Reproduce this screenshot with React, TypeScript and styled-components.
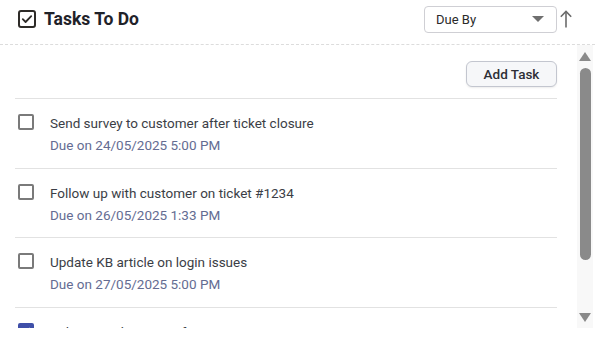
import React from "react";
import styled, { createGlobalStyle } from "styled-components";

const GlobalStyle = createGlobalStyle`
  html, body {
    margin: 0;
    padding: 0;
    background: #ffffff;
  }
  body {
    font-family: Roboto, "Liberation Sans", Arial, sans-serif;
  }
`;

type Task = {
  id: number;
  title: string;
  due: string;
  done?: boolean;
};

const tasks: Task[] = [
  { id: 1, title: "Send survey to customer after ticket closure", due: "24/05/2025 5:00 PM" },
  { id: 2, title: "Follow up with customer on ticket #1234", due: "26/05/2025 1:33 PM" },
  { id: 3, title: "Update KB article on login issues", due: "27/05/2025 5:00 PM" },
  { id: 4, title: "Solve a product issue for customer", due: "28/05/2025 5:00 PM", done: true },
];

const TitleIcon = () => (
  <svg width="18" height="18" viewBox="0 0 18 18" fill="none">
    <rect x="1" y="1" width="16" height="16" rx="2" stroke="#2e2b28" strokeWidth="2" />
    <path d="M4.8 9.2 L7.6 12 L13.2 6.2" stroke="#2e2b28" strokeWidth="1.8" strokeLinecap="round" strokeLinejoin="round" />
  </svg>
);

const SortArrow = () => (
  <svg width="14" height="20" viewBox="0 0 14 20" fill="none">
    <path d="M7 2.5 V18.5" stroke="#6b6b6b" strokeWidth="1.6" />
    <path d="M1.8 7.8 L7 2.5 L12.2 7.8" stroke="#6b6b6b" strokeWidth="1.6" fill="none" />
  </svg>
);

const TaskToDo = () => {
  return (
    <Card>
      <GlobalStyle />
      <Header>
        <Title>
          <TitleIcon />
          Tasks To Do
        </Title>
        <Sorter>
          <Select>
            <span>Due By</span>
            <Caret />
          </Select>
          <SortButton>
            <SortArrow />
          </SortButton>
        </Sorter>
      </Header>
      <Body>
        <ScrollArea>
          <Toolbar>
            <AddButton>Add Task</AddButton>
          </Toolbar>
          <List>
            {tasks.map((t) => (
              <Item key={t.id}>
                <Check $checked={!!t.done}>
                  {t.done && (
                    <svg width="12" height="12" viewBox="0 0 12 12" fill="none">
                      <path d="M2 6.2 L4.8 9 L10 3.2" stroke="#fff" strokeWidth="1.8" />
                    </svg>
                  )}
                </Check>
                <ItemText>
                  <ItemTitle>{t.title}</ItemTitle>
                  <Due>Due on {t.due}</Due>
                </ItemText>
              </Item>
            ))}
          </List>
        </ScrollArea>
        <Scrollbar>
          <ArrowUp />
          <Thumb />
          <ArrowDown />
        </Scrollbar>
      </Body>
    </Card>
  );
};

export default function App() {
  return <TaskToDo />;
}

const Card = styled.div`
  width: 595px;
  height: 337px;
  background: #fff;
  overflow: hidden;
`;

const Header = styled.div`
  height: 45px;
  box-sizing: border-box;
  display: flex;
  align-items: center;
  justify-content: space-between;
  padding: 0 22px 0 18px;
  border-bottom: 1px dashed #dcdcdc;
`;

const Title = styled.h2`
  margin: -6px 0 0;
  display: flex;
  align-items: center;
  gap: 8px;
  font-size: 17.5px;
  font-weight: 700;
  color: #1f2229;
`;

const Sorter = styled.div`
  display: flex;
  align-items: center;
  gap: 2px;
  margin-top: -6px;
`;

const Select = styled.div`
  width: 133px;
  height: 27px;
  box-sizing: border-box;
  border: 1px solid #cfcfd4;
  border-radius: 4px;
  display: flex;
  align-items: center;
  justify-content: space-between;
  padding: 0 12px 0 11px;
  font-size: 13px;
  color: #2a2a2a;
`;

const Caret = styled.span`
  width: 0;
  height: 0;
  border-left: 6px solid transparent;
  border-right: 6px solid transparent;
  border-top: 6px solid #6f6f6f;
`;

const SortButton = styled.div`
  display: flex;
  align-items: center;
`;

const Body = styled.div`
  height: 283px;
  display: flex;
  padding-right: 2px;
`;

const ScrollArea = styled.div`
  flex: 1;
  min-width: 0;
  overflow: hidden;
  padding: 16px 20px 0 15px;
`;

const Scrollbar = styled.div`
  width: 16px;
  background: #f8f8f8;
  display: flex;
  flex-direction: column;
  align-items: center;
  padding: 7px 0 6px;
  box-sizing: border-box;
`;

const ArrowUp = styled.span`
  width: 0;
  height: 0;
  border-left: 6px solid transparent;
  border-right: 6px solid transparent;
  border-bottom: 9px solid #8a8a8a;
`;

const ArrowDown = styled.span`
  margin-top: auto;
  width: 0;
  height: 0;
  border-left: 6px solid transparent;
  border-right: 6px solid transparent;
  border-top: 9px solid #8a8a8a;
`;

const Thumb = styled.span`
  margin-top: 7px;
  width: 11px;
  height: 192px;
  border-radius: 6px;
  background: #8a8a8a;
`;

const Toolbar = styled.div`
  display: flex;
  justify-content: flex-end;
  padding-bottom: 11px;
`;

const AddButton = styled.button`
  width: 91px;
  height: 26px;
  border: 1px solid #c3c6cf;
  border-radius: 6px;
  background: #f6f7f9;
  box-shadow: 0 1px 2px rgba(0, 0, 0, 0.08);
  font-family: Roboto, "Liberation Sans", Arial, sans-serif;
  font-size: 13.5px;
  font-weight: 500;
  color: #2d2f36;
`;

const List = styled.div`
  display: flex;
  flex-direction: column;
`;

const Item = styled.div`
  display: flex;
  align-items: flex-start;
  gap: 16px;
  padding: 13px 0 12.6px 3px;
  border-top: 1px solid #e2e2e2;
`;

const Check = styled.span<{ $checked: boolean }>`
  width: 16px;
  height: 16px;
  box-sizing: border-box;
  margin-top: 2px;
  border-radius: 2px;
  border: 2px solid ${(p) => (p.$checked ? "#3f4fa8" : "#7a7a7a")};
  background: ${(p) => (p.$checked ? "#3f4fa8" : "#fff")};
  display: flex;
  align-items: center;
  justify-content: center;
  flex-shrink: 0;
`;

const ItemText = styled.div`
  display: flex;
  flex-direction: column;
  gap: 2px;
  padding-top: 1px;
`;

const ItemTitle = styled.div`
  font-size: 13.5px;
  line-height: 20px;
  color: #3b3e46;
`;

const Due = styled.div`
  font-size: 13.5px;
  line-height: 20px;
  color: #646c92;
`;
